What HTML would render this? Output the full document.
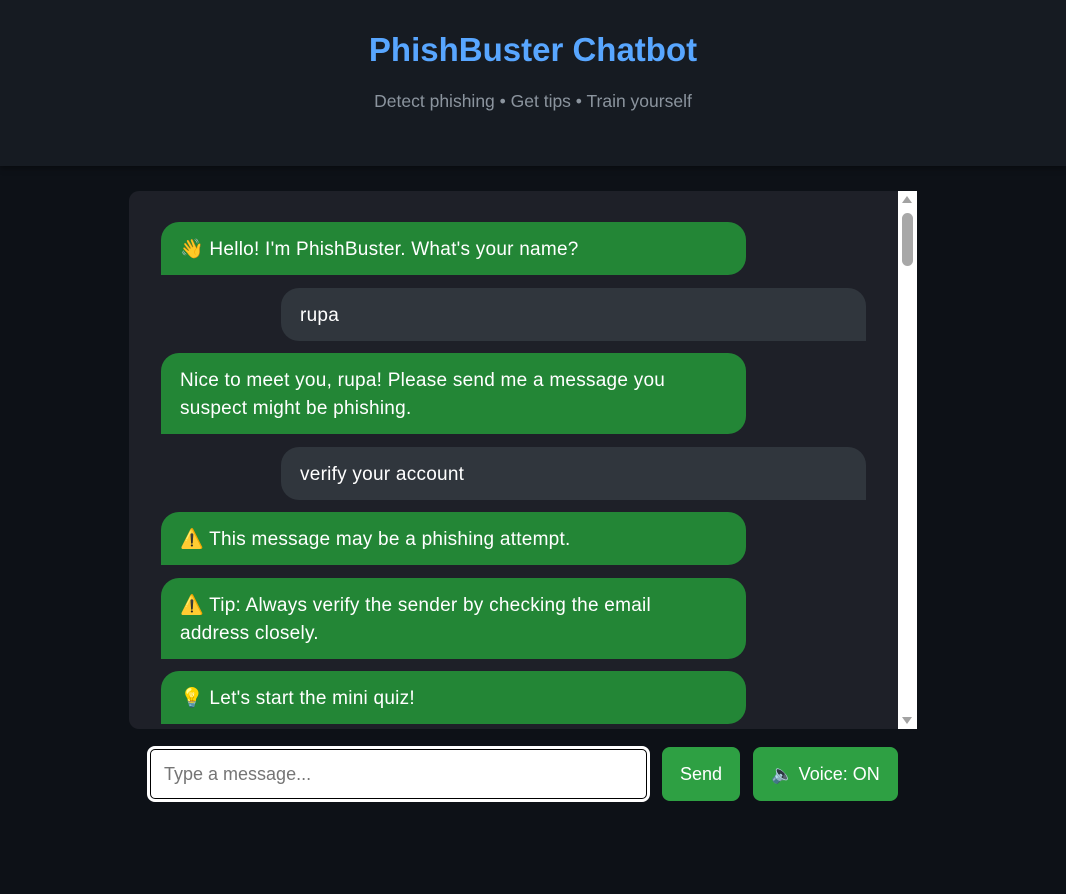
<!DOCTYPE html>
<html><head><style>
*{box-sizing:border-box;margin:0;padding:0}
body{width:1066px;height:894px;background:#0d1117;font-family:"Liberation Sans","DejaVu Sans",sans-serif;overflow:hidden;position:relative}
.hdr{height:166px;background:#161b22;text-align:center;box-shadow:0 2px 6px rgba(0,0,0,.4)}
.hdr h1{position:absolute;top:31px;left:0;right:0;color:#58a6ff;font-size:33px;font-weight:bold}
.hdr p{position:absolute;top:91px;left:0;right:0;color:#8b949e;font-size:17.5px}
.chat{position:absolute;left:129px;top:191px;width:788px;height:538px;background:#1e2028;border-radius:10px 0 0 10px;overflow:hidden}
.sb{position:absolute;right:0;top:0;width:19px;height:538px;background:#fff}
.sb .th{position:absolute;left:4px;top:22px;width:11px;height:53px;background:#a8a8a8;border-radius:6px}
.m{position:absolute;width:585px;color:#fff;font-size:19px;letter-spacing:.25px;line-height:28px;padding:14px 26px 11px 19px}
.b{left:32px;background:#238636;border-radius:18px 18px 18px 0}
.u{left:152px;background:#30363d;border-radius:18px 18px 0 18px}
input{position:absolute;left:147px;top:746px;width:503px;height:56px;border:2px solid #fff;outline:1px solid #000;outline-offset:-4px;border-radius:8px;background:#fff;font-size:18px;padding-left:15px;font-family:"Liberation Sans",sans-serif}
.btn{position:absolute;top:747px;height:54px;background:#2ea043;color:#fff;border-radius:8px;font-size:18px;line-height:54px;text-align:center}
</style></head><body>
<div class="hdr"><h1>PhishBuster Chatbot</h1><p>Detect phishing • Get tips • Train yourself</p></div>
<div class="chat">
<div class="m b" style="top:31px">👋 Hello! I'm PhishBuster. What's your name?</div>
<div class="m u" style="top:97px">rupa</div>
<div class="m b" style="top:162px">Nice to meet you, rupa! Please send me a message you suspect might be phishing.</div>
<div class="m u" style="top:256px">verify your account</div>
<div class="m b" style="top:321px">⚠️ This message may be a phishing attempt.</div>
<div class="m b" style="top:387px">⚠️ Tip: Always verify the sender by checking the email address closely.</div>
<div class="m b" style="top:480px">💡 Let's start the mini quiz!</div>
<div class="sb"><div style="position:absolute;left:4px;top:5px;border:5.5px solid transparent;border-bottom:7px solid #a3a3a3;border-top:0"></div><div class="th"></div><div style="position:absolute;left:4px;bottom:5px;border:5.5px solid transparent;border-top:7px solid #a3a3a3;border-bottom:0"></div></div>
</div>
<input placeholder="Type a message...">
<div class="btn" style="left:662px;width:78px">Send</div>
<div class="btn" style="left:753px;width:145px">🔈 Voice: ON</div>
</body></html>
